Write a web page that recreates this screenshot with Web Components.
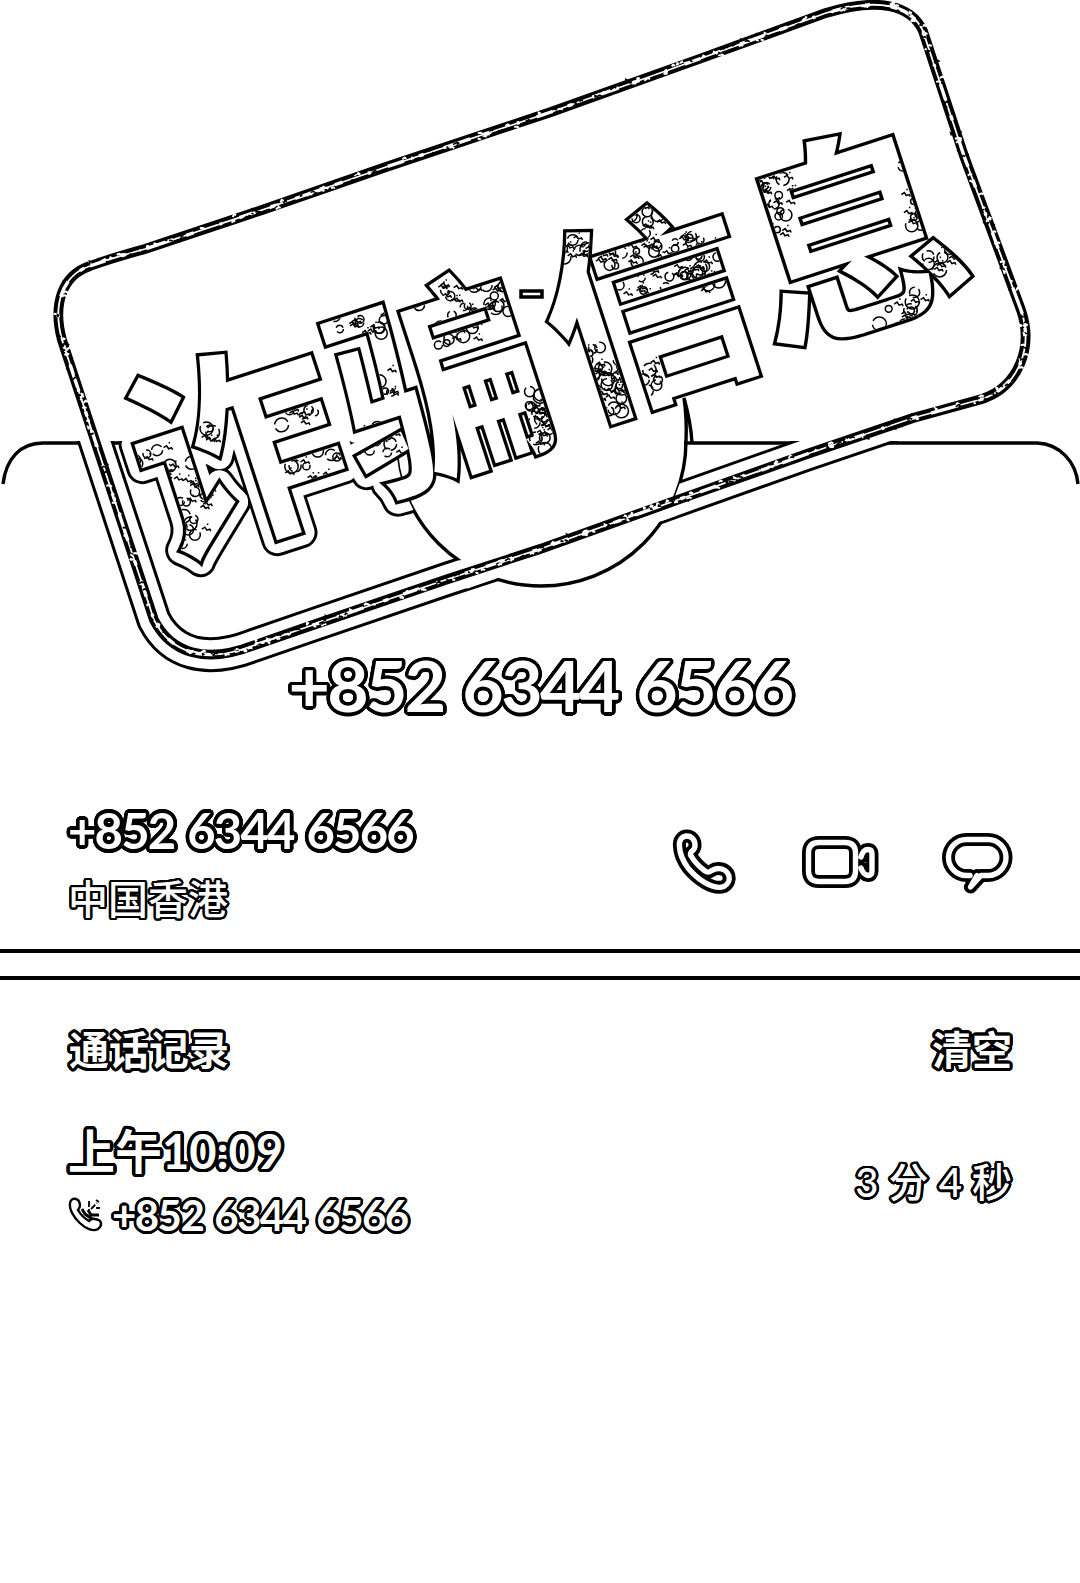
<!DOCTYPE html>
<html lang="zh-CN"><head><meta charset="utf-8"><title>通话记录</title>
<style>html,body{margin:0;background:#fff}body{font-family:Lato,"Noto Sans CJK SC",sans-serif;color:#fff;width:1080px;min-height:1583px;overflow:hidden}</style></head>
<body><call-page></call-page>
<script>
function define(name, html, after){
  const t=document.createElement('template'); t.innerHTML=html;
  customElements.define(name,class extends HTMLElement{
    constructor(){super();this.attachShadow({mode:'open'}).append(t.content.cloneNode(true));if(after)after(this.shadowRoot,this);}
  });
}
// Round-cornered outline: a ring of offset shadows around the glyphs.
const ring=Array.from({length:32},(_,i)=>{const a=i*Math.PI/16;return `calc(var(--edge,3.5px)*${Math.cos(a).toFixed(3)}) calc(var(--edge,3.5px)*${Math.sin(a).toFixed(3)}) 0 #000`}).join(',');
define('outline-text',`<style>
:host{display:block;white-space:nowrap;font-weight:700;line-height:1;font-size:var(--size,40px);letter-spacing:var(--ls,0);word-spacing:var(--ws,0);color:#fff;text-shadow:${ring}}
</style><slot></slot>`);

const frame='M90 266 Q112 258 145 249 L262 210 L386 167 L551 112 L702 58 L826 13 C878 -3 911 5 923 31 L964 156 L1021 310 C1034 348 1018 387 982 399 L913 418 L807 454 L680 499 L540 549 L448 579 L310 626 L252 646 C205 664 171 653 154 620 L62 340 C52 303 63 275 90 266 Z';
const words='<use href="#w1"/><use href="#w2"/><use href="#w3"/><use href="#w4"/>';
define('warning-stamp',`<style>:host{display:block}svg{display:block}text{font:700 214px "Noto Sans CJK SC",sans-serif}</style>
<svg width="1080" height="700" viewBox="0 0 1080 700">
<defs>
<g id="w"><text id="w1" text-anchor="middle" transform="translate(262 525) rotate(-18) scale(.98 1)">诈</text><text id="w2" text-anchor="middle" transform="translate(464 460) rotate(-18) scale(.98 1)">骗</text><text id="w3" text-anchor="middle" transform="translate(674 384) rotate(-18) scale(.98)">信</text><text id="w4" text-anchor="middle" transform="translate(876 313) rotate(-18) scale(1.03 1)">息</text></g>
<clipPath id="inside">${words}</clipPath>
<clipPath id="card"><path clip-rule="evenodd" d="M0 441H1080V700H0ZM396 441A145 145 0 0 0 686 441Z"/></clipPath>
<path id="f" d="${frame}"/>
</defs>
<g fill="none" stroke="#000" stroke-width="3.4">
<path d="M3 484C6 459 20 443 43 443H1037C1060 444 1076 462 1078 484"/>
<circle cx="541" cy="441" r="145"/><path fill="#fff" stroke="none" d="M380 280H710V441H380Z"/><path d="M686 441Q687 418 684 398Q691 423 692 443" />
</g>
<path d="M398 443H684" stroke="#fff" stroke-width="6"/>
<g clip-path="url(#card)" fill="none" stroke-linejoin="round"><g stroke="#000"><use href="#f" stroke-width="35"/><use href="#w" stroke-width="32"/></g><g stroke="#fff"><use href="#f" stroke-width="29"/><use href="#w" stroke-width="26"/></g></g>
<path d="M462 575L672 502" stroke="#fff" stroke-width="29"/>
<g fill="none"><use href="#f" stroke="#000" stroke-width="9.8"/><use href="#f" stroke="#fff" stroke-width="1.8"/><use href="#f" stroke="#fff" stroke-width="3.4" stroke-dasharray="17 16 5 21 28 14 8 27 3 18"/></g>
<g id="scratch"></g>
<use href="#w" fill="#fff" stroke="#000" stroke-width="6.8" paint-order="stroke"/>
<g id="spots" clip-path="url(#inside)" fill="none" stroke="#000" stroke-width="1.5"></g>
<path d="M521 291H542V297H521Z" fill="#fff" stroke="#000" stroke-width="3.5"/>
</svg>`,r=>{
  let seed=71; const rnd=()=>(seed=(seed*16807)%2147483647)/2147483647;
  const regions=[[135,445,35,45,7],[168,460,40,85,16],[190,428,24,18,3],[280,408,35,18,5],[280,450,60,30,6],[325,315,60,20,8],[350,425,60,34,9],[370,370,25,40,3],[415,285,100,30,18],[430,315,60,32,8],[525,390,30,62,16],[560,234,20,25,4],[580,340,42,80,24],[585,235,140,30,24],[605,265,120,30,20],[630,205,30,40,6],[640,360,30,40,5],[755,175,35,60,15],[900,145,35,85,12],[870,290,55,40,10],[925,245,45,30,7]];
  let s='';
  for(const [x,y,w,h,n] of regions)for(let i=0;i<n;i++){
    const a=x+rnd()*w,b=y+rnd()*h,q=3+rnd()*4,d=5+rnd()*22;
    s+=`<circle cx="${a.toFixed(1)}" cy="${b.toFixed(1)}" r="${q.toFixed(1)}" stroke-dasharray="${d.toFixed(1)} 4"/>`;
    const u=x+rnd()*w,v=y+rnd()*h;
    s+=`<path d="M${u} ${v}l3 -2l2 3l3 -1l1 2M${u+5} ${v-5}h1.500"/>`;
  }
  r.getElementById('spots').innerHTML=s;
  const p=r.getElementById('f'),L=p.getTotalLength();let c='';
  for(let i=0;i<420;i++){
    const at=rnd()*L,k=p.getPointAtLength(at),x=k.x+rnd()*7-5,y=k.y+rnd()*6-2;
    c+=`<path d="M${x.toFixed(1)} ${y.toFixed(1)}l${(rnd()*5-1).toFixed(1)} ${(-rnd()*3).toFixed(1)}l2 1" fill="none" stroke="${i%2?'#fff':'#000'}" stroke-width="${i%2?2:1.6}"/>`;
  }
  r.getElementById('scratch').innerHTML=c;
});
const shapes={
 phone:[64,64,'M7.5 17C5.500 2 24 3 23 16C22.500 22 18 20 18.500 25Q23.500 34 33 41C38 45 39 38.500 46 38.500C58 38.500 61 51.500 52 56.500C41 60.500 25 49 16 38Q8 27 7.500 17Z'],
 video:[76,64,'M18 12.500H44Q54.500 12.500 54.500 23V41Q54.500 51.500 44 51.500H18Q7.500 51.500 7.500 41V23Q7.500 12.500 18 12.500ZM60 27Q62 19.500 67 19.500Q71 19.500 71 24V41Q71 45.500 67 45.500Q62 44.500 60 38'],
 chat:[71,64,'M28 45.500H24.500A18 18 0 0 1 24.500 9.500H46A18 18 0 0 1 46 45.500H39L28.500 57L35 45.500']};
customElements.define('action-icon',class extends HTMLElement{connectedCallback(){
 const [w,h,d]=shapes[this.getAttribute('kind')];
 this.attachShadow({mode:'open'}).innerHTML=`<style>:host{display:block}svg{display:block;overflow:visible}</style><svg width="${w}" height="${h}" fill="none" stroke-linejoin="round" stroke-linecap="round"><path d="${d}" stroke="#000" stroke-width="13"/><path d="${d}" stroke="#fff" stroke-width="5.4"/></svg>`;
}});
define('contact-header',`<style>:host{display:grid;height:740px;justify-items:center}warning-stamp,outline-text{grid-area:1/1}outline-text{align-self:end;margin-bottom:20px;--size:71.5px;--ls:-.037em;--ws:.055em}</style><warning-stamp></warning-stamp><outline-text><slot></slot></outline-text>`);
define('number-row',`<style>:host{display:flex;justify-content:space-between;height:209px;box-sizing:border-box;padding:66px 67px 0 68px}.t{display:flex;flex-direction:column;gap:24px}.n{--size:49px;--ls:-.037em;--ws:.055em;--edge:3.6px}.p{font-weight:500;--size:40px;--edge:2.2px}.a{display:flex;gap:65px;padding-top:24px}</style>
<div class="t"><outline-text class="n"><slot name="number"></slot></outline-text><outline-text class="p"><slot name="place"></slot></outline-text></div><div class="a"><action-icon kind="phone"></action-icon><action-icon kind="video"></action-icon><action-icon kind="chat"></action-icon></div>`);
define('section-divider',`<style>:host{display:block;height:23px;border-top:4px solid #000;border-bottom:4px solid #000}</style>`);
define('log-heading',`<style>:host{display:flex;justify-content:space-between;padding:50px 68px 0 69px;--size:40px;--edge:2.9px}</style><outline-text><slot name="title"></slot></outline-text><outline-text><slot name="action"></slot></outline-text>`);
define('call-entry',`<style>:host{display:flex;justify-content:space-between;align-items:center;padding:58px 68px 0}.l{display:flex;flex-direction:column;gap:19px}.time{--size:47px;--edge:3.4px}.num{display:flex;align-items:center;gap:8px;--size:42px;--ls:-.037em;--ws:.055em;--edge:2.6px}.dur{--size:40px;--edge:2.5px;font-weight:500}svg{display:block}</style>
<div class="l"><outline-text class="time"><slot name="time"></slot></outline-text><div class="num"><svg width="36" height="36" viewBox="0 0 36 36" fill="none" stroke="#000" stroke-width="2.4"><path d="M2 6C3 0 11 0 12 8Q12 11 10 13Q14 20 21 24Q23 21 27 22C35 23 34 29 30 32C20 38 0 18 2 6Z"/><path stroke-width="1.8" d="M21 4V14M23 12L29 6M28 3l3 2M28 11H32" stroke-dasharray="6 2"/><path stroke-width="3" d="M14 12L17 17L24 22M20 13L23 18L31 18"/></svg><outline-text><slot name="number"></slot></outline-text></div></div><outline-text class="dur"><slot name="duration"></slot></outline-text>`);
define('call-page',`<style>:host{display:flex;flex-direction:column;width:1080px;height:1583px;overflow:hidden}</style>
<contact-header>+852 6344 6566</contact-header>
<number-row><span slot="number">+852 6344 6566</span><span slot="place">中国香港</span></number-row>
<section-divider></section-divider>
<log-heading><span slot="title">通话记录</span><span slot="action">清空</span></log-heading>
<call-entry><span slot="time">上午10:09</span><span slot="number">+852 6344 6566</span><span slot="duration">3 分 4 秒</span></call-entry>`);
</script></body></html>
